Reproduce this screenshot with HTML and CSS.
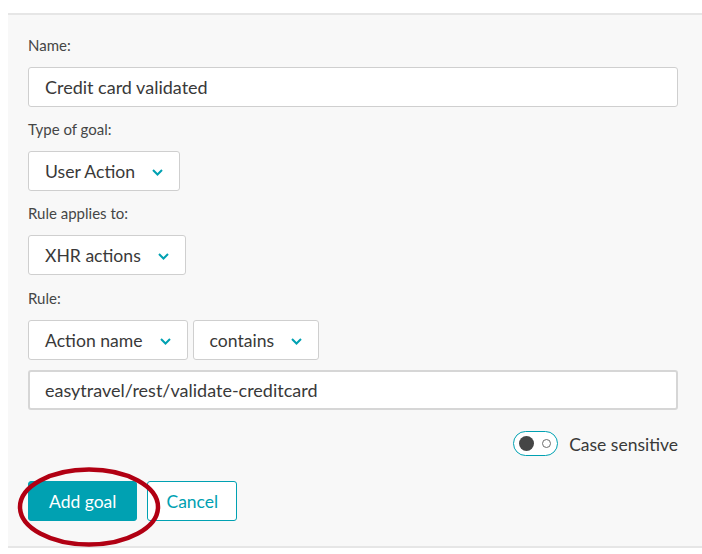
FILE: index.html
```html
<!DOCTYPE html>
<html lang="en">
<head>
<meta charset="utf-8">
<title>Add goal</title>
<link rel="stylesheet" href="styles.css">
</head>
<body>
<div class="page">
  <form class="panel">
    <div class="field">
      <label class="label">Name:</label>
      <div class="input">Credit card validated</div>
    </div>
    <div class="field">
      <label class="label">Type of goal:</label>
      <div class="row">
        <div class="select">User Action<svg class="chev" width="11" height="7" viewBox="0 0 11 7"><polyline points="1,1 5.5,5.5 10,1" fill="none" stroke="#00a1b2" stroke-width="2"/></svg></div>
      </div>
    </div>
    <div class="field">
      <label class="label">Rule applies to:</label>
      <div class="row">
        <div class="select">XHR actions<svg class="chev" width="11" height="7" viewBox="0 0 11 7"><polyline points="1,1 5.5,5.5 10,1" fill="none" stroke="#00a1b2" stroke-width="2"/></svg></div>
      </div>
    </div>
    <div class="field field-rule">
      <label class="label">Rule:</label>
      <div class="row">
        <div class="select">Action name<svg class="chev" width="11" height="7" viewBox="0 0 11 7"><polyline points="1,1 5.5,5.5 10,1" fill="none" stroke="#00a1b2" stroke-width="2"/></svg></div>
        <div class="select">contains<svg class="chev" width="11" height="7" viewBox="0 0 11 7"><polyline points="1,1 5.5,5.5 10,1" fill="none" stroke="#00a1b2" stroke-width="2"/></svg></div>
      </div>
      <div class="input input-thick">easytravel/rest/validate-creditcard</div>
    </div>
    <div class="toggle-row">
      <span class="toggle"><span class="knob"></span><span class="off"></span></span>
      <span class="toggle-label">Case sensitive</span>
    </div>
    <div class="actions">
      <button type="button" class="btn btn-primary">Add goal</button>
      <button type="button" class="btn btn-secondary">Cancel</button>
      <svg class="highlight" width="146" height="82" viewBox="0 0 146 82"><ellipse cx="73" cy="41" rx="69" ry="37.5" fill="none" stroke="#b10013" stroke-width="4.5"/></svg>
    </div>
  </form>
</div>
</body>
</html>
```
FILE: styles.css
```css
* { box-sizing: border-box; }
html, body { margin: 0; padding: 0; background: #ffffff; }
body {
  font-family: "Lato", "Open Sans", sans-serif;
  color: #393939;
  width: 702px;
  height: 554px;
  overflow: hidden;
}
.page { padding-top: 13px; padding-left: 8px; }
.panel {
  background: #f8f8f8;
  border-top: 2px solid #e6e6e6;
  border-bottom: 2px solid #e6e6e6;
  padding: 20px 24px 25px 20px;
}
.field { display: flex; flex-direction: column; }
.label {
  font-size: 15px;
  line-height: 20px;
  color: #454646;
  margin-bottom: 12px;
}
.field + .field { margin-top: 12px; }
.field-rule { margin-top: 13px !important; }
.input {
  height: 40px;
  background: #fff;
  border: 1px solid #cfcfcf;
  border-radius: 3px;
  padding: 0 16px;
  font-size: 18px;
  line-height: 38px;
  color: #393939;
}
.input-thick { border: 2px solid #d6d6d6; padding-left: 15px; line-height: 36px; margin-top: 10px; }
.row { display: flex; gap: 5px; }
.select {
  display: flex;
  align-items: center;
  height: 40px;
  background: #fff;
  border: 1px solid #cfcfcf;
  border-radius: 3px;
  padding: 0 16px;
  font-size: 17.6px;
  color: #393939;
}
.chev { margin-left: 17px; margin-top: 2px; }
.toggle-row {
  display: flex;
  justify-content: flex-end;
  align-items: center;
  margin-top: 21px;
  height: 25px;
  gap: 11px;
}
.toggle {
  position: relative;
  width: 45px;
  height: 25px;
  border: 1px solid #00a1b2;
  border-radius: 13px;
  background: #fff;
  display: flex;
  align-items: center;
  justify-content: space-between;
  padding: 0 6px 0 5px;
}
.knob { width: 15px; height: 15px; border-radius: 50%; background: #454646; }
.off { width: 9px; height: 9px; border-radius: 50%; border: 1.5px solid #6d6d6d; }
.toggle-label { font-size: 17.5px; line-height: 25px; padding-top: 2px; color: #393939; }
.actions {
  position: relative;
  display: flex;
  gap: 10px;
  margin-top: 25px;
}
.btn {
  height: 40px;
  border-radius: 3px;
  font-family: inherit;
  font-size: 17.5px;
  cursor: pointer;
}
.btn-primary { background: #00a1b2; border: 1px solid #00a1b2; color: #fff; padding: 0 20px; }
.btn-secondary { background: #fff; border: 1px solid #00a1b2; color: #00a1b2; padding: 0 18px; }
.highlight { position: absolute; left: -12px; top: -15px; pointer-events: none; }
```
